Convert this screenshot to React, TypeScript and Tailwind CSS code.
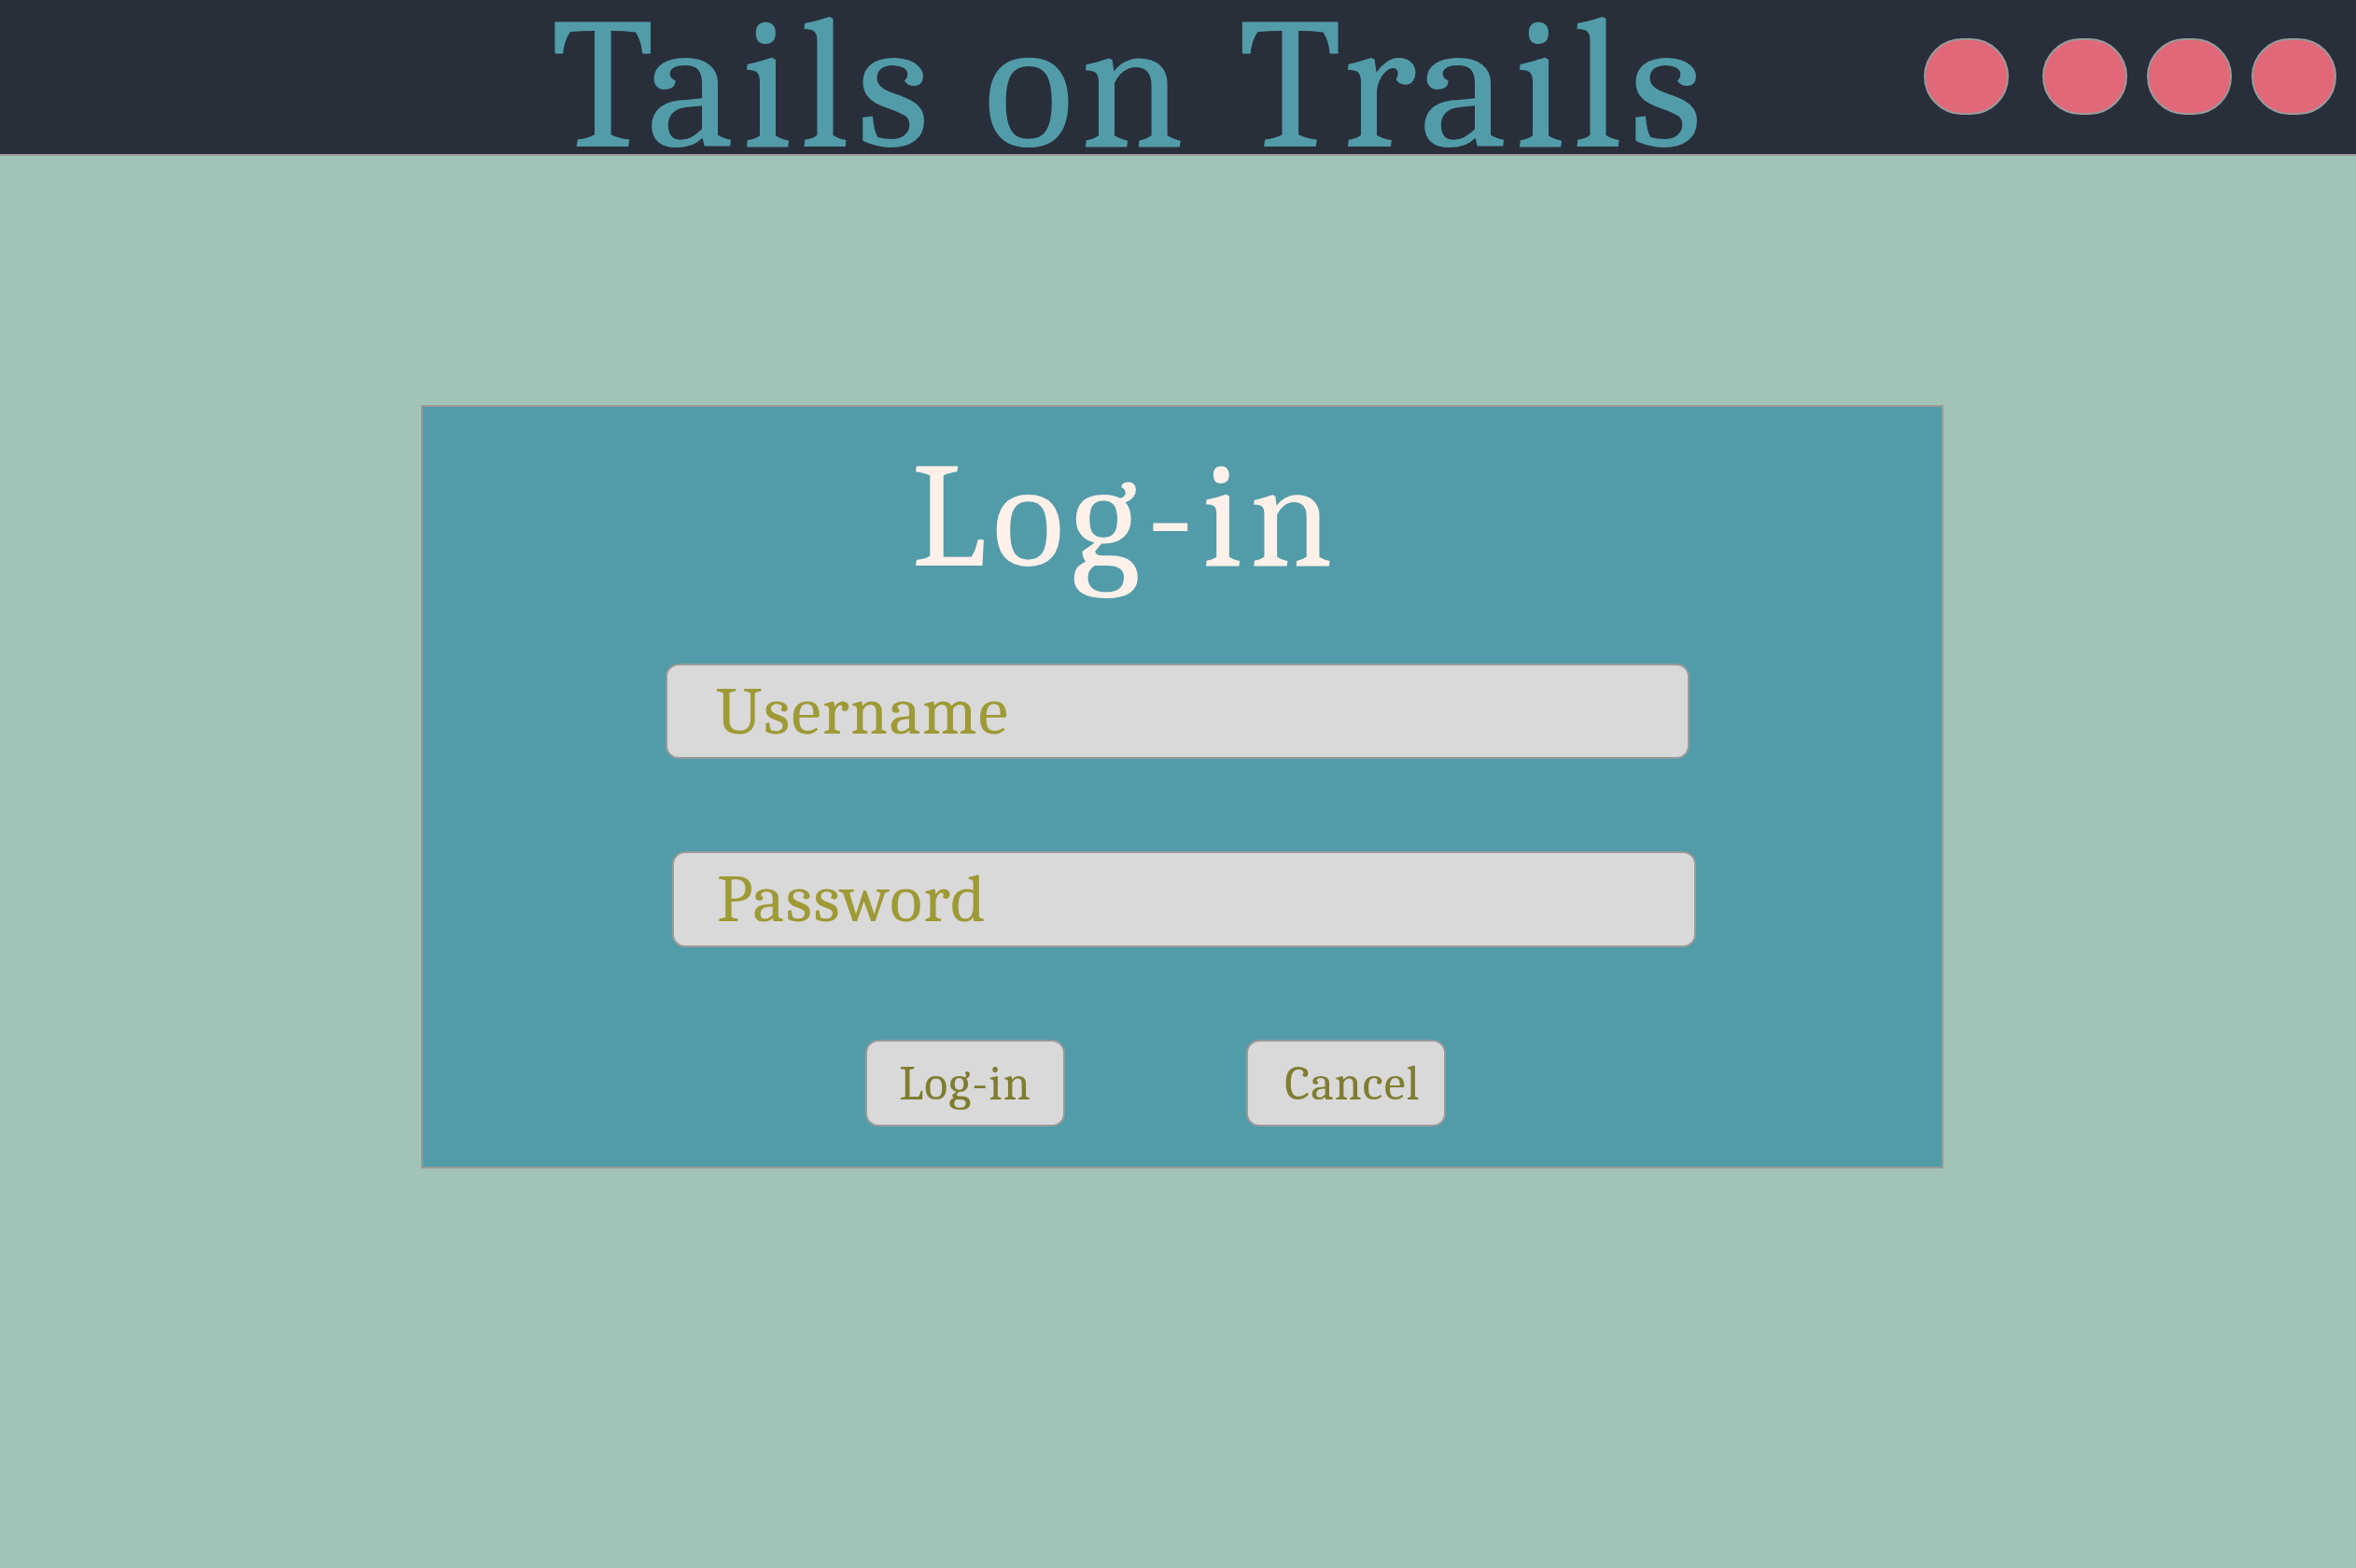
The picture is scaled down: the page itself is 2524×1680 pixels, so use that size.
const serif = "font-['Caladea','Cambria','Liberation_Serif',serif]";

function Dot({ className = "" }: { className?: string }) {
  return <div className={`h-[82px] w-[91px] rounded-full border-2 border-[#9a9a9a] bg-[#e06878] ${className}`} />;
}

function Field({ label, className }: { label: string; className: string }) {
  return (
    <input
      type="text"
      placeholder={label}
      className={`h-[102px] w-[1097px] rounded-[14px] border-2 border-[#9a9a9a] bg-[#d9d9d9] text-[72px] leading-[72px] tracking-[1.5px] text-[#9e9a35] outline-none placeholder:text-[#9e9a35] ${serif} ${className}`}
    />
  );
}

function Button({ label, className = "" }: { label: string; className?: string }) {
  return (
    <button
      type="button"
      className={`flex h-[93px] w-[214px] items-center justify-center rounded-[14px] border-2 border-[#9a9a9a] bg-[#d9d9d9] text-[52px] leading-none tracking-[1px] text-[#7f7d30] ${serif} ${className}`}
    >
      {label}
    </button>
  );
}

export default function App() {
  return (
    <div className="min-h-screen w-full bg-[#a1c4b6]">
      <header className="flex h-[167px] items-start border-b-2 border-[#9a9a9a] bg-[#282f3b]">
        <h1 className={`mt-[17px] w-[2040px] pl-[381px] text-center text-[200px] leading-[150px] tracking-[7px] whitespace-nowrap text-[#529ca9] ${serif}`}>
          Tails on Trails
        </h1>
        <div className="ml-[21px] mt-[41px] flex">
          <Dot />
          <Dot className="ml-[36px]" />
          <Dot className="ml-[21px]" />
          <Dot className="ml-[21px]" />
        </div>
      </header>

      <main className="pt-[267px]">
        <section className="ml-[451px] flex h-[818px] w-[1631px] flex-col items-start border-2 border-[#9a9a9a] bg-[#529ca9]">
          <h2 className={`mt-[38px] w-[1505px] text-center text-[160px] leading-none tracking-[7px] text-[#fff0ea] ${serif}`}>Log-in</h2>
          <Field label="Username" className="ml-[260px] mt-[77px] pl-[52px]" />
          <Field label="Password" className="ml-[267px] mt-[99px] h-[103px] pl-[46px]" />
          <div className="ml-[474px] mt-[99px] flex gap-[194px]">
            <Button label="Log-in" />
            <Button label="Cancel" className="pl-[14px]" />
          </div>
        </section>
      </main>
    </div>
  );
}
